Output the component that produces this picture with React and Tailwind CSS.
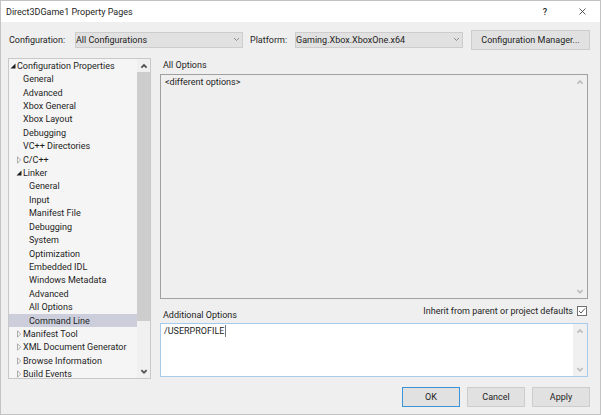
import React, { useState } from "react";

const treeItems = [
  { label: "Configuration Properties", level: 0, state: "open" },
  { label: "General", level: 1 },
  { label: "Advanced", level: 1 },
  { label: "Xbox General", level: 1 },
  { label: "Xbox Layout", level: 1 },
  { label: "Debugging", level: 1 },
  { label: "VC++ Directories", level: 1 },
  { label: "C/C++", level: 1, state: "closed" },
  { label: "Linker", level: 1, state: "open" },
  { label: "General", level: 2 },
  { label: "Input", level: 2 },
  { label: "Manifest File", level: 2 },
  { label: "Debugging", level: 2 },
  { label: "System", level: 2 },
  { label: "Optimization", level: 2 },
  { label: "Embedded IDL", level: 2 },
  { label: "Windows Metadata", level: 2 },
  { label: "Advanced", level: 2 },
  { label: "All Options", level: 2 },
  { label: "Command Line", level: 2 },
  { label: "Manifest Tool", level: 1, state: "closed" },
  { label: "XML Document Generator", level: 1, state: "closed" },
  { label: "Browse Information", level: 1, state: "closed" },
  { label: "Build Events", level: 1, state: "closed" },
];

const indents = ["pl-px", "pl-[7px]", "pl-[13px]"];

function Arrow({ state }) {
  return (
    <svg viewBox="0 0 7 8" className="w-[7px] h-2 shrink-0" aria-hidden="true">
      {state === "open" && <path d="M5.5 1.5v5h-5z" fill="#1e1e1e" />}
      {state === "closed" && (
        <path d="M1.5 0.8l3.2 3.2-3.2 3.2z" fill="none" stroke="#9a9a9a" strokeWidth="0.8" />
      )}
    </svg>
  );
}

function ScrollButton({ down, label, className }) {
  return (
    <button
      type="button"
      aria-label={label}
      className={`flex h-[13px] w-full shrink-0 items-center justify-center ${className}`}
    >
      <svg viewBox="0 0 8 6" className="h-[6px] w-2" aria-hidden="true">
        <path
          d={down ? "M1.4 1.2L4 3.8l2.6-2.6" : "M1.4 4.6L4 2l2.6 2.6"}
          fill="none"
          stroke="currentColor"
          strokeWidth="1.8"
        />
      </svg>
    </button>
  );
}

function Dropdown({ id, value }) {
  return (
    <div className="relative min-w-0 flex-1">
      <select
        id={id}
        defaultValue={value}
        className="block h-4 w-full appearance-none border border-[#cdcdcd] bg-[#e1e1e1] leading-[14px] outline-none"
      >
        <option>{value}</option>
      </select>
      <svg
        viewBox="0 0 7 5"
        className="pointer-events-none absolute right-[3px] top-[5px] h-[5px] w-[7px]"
        aria-hidden="true"
      >
        <path d="M1 1l2.5 2.5L6 1" fill="none" stroke="#777" strokeWidth="0.8" />
      </svg>
    </div>
  );
}

export default function App() {
  const [selected, setSelected] = useState(19);
  const [inherit, setInherit] = useState(true);
  const [options, setOptions] = useState("/USERPROFILE");

  return (
    <div className="flex h-screen flex-col border border-[#c3c3c3] bg-[#efefef] font-['Roboto','Open_Sans',sans-serif] text-[9px] leading-3 text-[#1e1e1e]">
      <header className="flex h-[21px] shrink-0 items-center bg-white pl-[5px]">
        <h1 className="flex-1">Direct3DGame1 Property Pages</h1>
        <button type="button" aria-label="Help" className="mr-px w-9 font-medium">
          ?
        </button>
        <button type="button" aria-label="Close" className="flex w-9 justify-center">
          <svg viewBox="0 0 7 7" className="size-[7px]" aria-hidden="true">
            <path d="M.5.5l6 6M6.5.5l-6 6" stroke="#333" strokeWidth="0.8" />
          </svg>
        </button>
      </header>

      <div className="mt-[7px] flex h-[22px] shrink-0 items-center pl-2 pr-2.5">
        <label htmlFor="configuration" className="w-[66px]">
          Configuration:
        </label>
        <Dropdown id="configuration" value="All Configurations" />
        <label htmlFor="platform" className="w-[52px] pl-[7px]">
          Platform:
        </label>
        <Dropdown id="platform" value="Gaming.Xbox.XboxOne.x64" />
        <button
          type="button"
          className="ml-2 h-5 w-[119px] border border-[#cdcdcd] bg-[#e1e1e1]"
        >
          Configuration Manager...
        </button>
      </div>

      <main className="mt-[7px] flex min-h-0 flex-1 gap-[9px] pl-[7px] pr-3">
        <nav className="flex w-[143px] shrink-0 overflow-hidden border border-[#c8c8c8] bg-[#f5f5f5]">
          <ul className="grid h-[322px] min-w-0 flex-1 auto-rows-fr">
            {treeItems.map((item, i) => (
              <li key={i} className="min-h-0">
                <button
                  type="button"
                  onClick={() => setSelected(i)}
                  className={`flex h-full w-full items-center whitespace-nowrap text-left ${indents[item.level]} ${
                    selected === i ? "bg-[#cccedb]" : ""
                  }`}
                >
                  <Arrow state={item.state} />
                  {item.label}
                </button>
              </li>
            ))}
          </ul>
          <div className="flex w-[13px] shrink-0 flex-col bg-[#f0f0f0] text-[#505050]">
            <ScrollButton label="Scroll up" />
            <div className="h-[249px] bg-[#cdcdcd]" />
            <ScrollButton down label="Scroll down" className="mt-auto" />
          </div>
        </nav>

        <section className="flex min-w-0 flex-1 flex-col pb-0.5">
          <label htmlFor="all-options" className="h-4 shrink-0 pl-[3px] pt-px">
            All Options
          </label>
          <div className="flex min-h-0 flex-1 border border-[#a0a0a0]">
            <textarea
              id="all-options"
              readOnly
              value="<different options>"
              className="min-w-0 flex-1 resize-none bg-transparent px-1 py-px outline-none"
            />
            <div className="flex w-[14px] shrink-0 flex-col justify-between text-[#bfbfbf]">
              <ScrollButton label="Scroll up" />
              <ScrollButton down label="Scroll down" />
            </div>
          </div>

          <div className="flex h-6 shrink-0 items-center pl-[3px]">
            <label htmlFor="additional-options" className="flex-1 pt-2">
              Additional Options
            </label>
            <label htmlFor="inherit">Inherit from parent or project defaults</label>
            <span className="relative ml-1 mr-px size-[10px]">
              <input
                id="inherit"
                type="checkbox"
                checked={inherit}
                onChange={(e) => setInherit(e.target.checked)}
                className="block size-[10px] appearance-none border border-[#707070] bg-white"
              />
              {inherit && (
                <svg
                  viewBox="0 0 10 10"
                  className="pointer-events-none absolute inset-0 size-[10px]"
                  aria-hidden="true"
                >
                  <path d="M2 5l2 2 4-4.5" fill="none" stroke="#444" strokeWidth="0.9" />
                </svg>
              )}
            </span>
          </div>
          <div className="relative flex h-[54px] shrink-0 border border-[#a9cbeb] bg-white">
            <textarea
              id="additional-options"
              value={options}
              onChange={(e) => setOptions(e.target.value)}
              className="min-w-0 flex-1 resize-none px-[3px] py-px outline-none"
            />
            <span className="absolute left-16 top-px h-3 w-px bg-[#777]" />
            <div className="flex w-[14px] shrink-0 flex-col justify-between bg-[#f0f0f0] text-[#bfbfbf]">
              <ScrollButton label="Scroll up" />
              <ScrollButton down label="Scroll down" />
            </div>
          </div>
        </section>
      </main>

      <footer className="flex h-[35px] shrink-0 items-center justify-end gap-[7px] pr-2.5">
        <button type="button" className="h-5 w-[58px] border border-[#3c94d8] bg-[#e1e1e1]">
          OK
        </button>
        <button type="button" className="h-5 w-[58px] border border-[#cdcdcd] bg-[#e1e1e1]">
          Cancel
        </button>
        <button type="button" className="h-5 w-[58px] border border-[#cdcdcd] bg-[#e1e1e1]">
          Apply
        </button>
      </footer>
    </div>
  );
}
